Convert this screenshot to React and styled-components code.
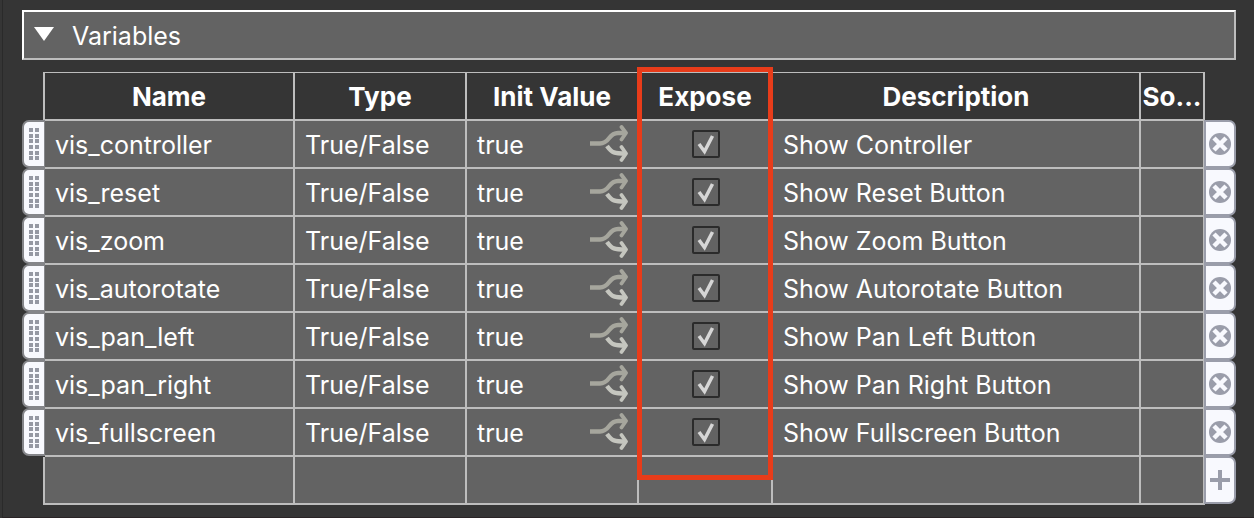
import React from "react";
import styled, { createGlobalStyle } from "styled-components";

const line = "#bdbdbd";
const fill = "#636363";
const dark = "#353535";

const GlobalStyle = createGlobalStyle`
  *, *::before, *::after { box-sizing: border-box; }
  body {
    margin: 0;
    background: ${dark};
    color: #fff;
    font-family: Inter, "Liberation Sans", sans-serif;
    font-size: 25px;
    line-height: 30px;
  }
`;

const Page = styled.main`
  margin-left: 2px;
  padding: 10px 18px 12px 19px;
  border-left: 1px solid #2a2a2a;
  border-bottom: 1px solid #2a2426;
`;

const PanelHeader = styled.button`
  display: flex;
  align-items: center;
  gap: 18px;
  width: 100%;
  height: 50px;
  padding: 2px 10px 0;
  border: 2px solid;
  border-color: #fff ${line} ${line} #fff;
  background: ${fill};
  color: inherit;
  font: inherit;
  text-align: left;
`;

const Disclosure = styled.svg`
  width: 20px;
  height: 16px;
  margin-bottom: 4px;
`;

const Table = styled.table`
  width: 100%;
  margin-top: 12px;
  border-collapse: separate;
  border-spacing: 0;
  table-layout: fixed;
`;

const Col = styled.col`
  width: ${(p) => (p.$width ? `${p.$width}px` : "auto")};
`;

const HeadCell = styled.th`
  height: 49px;
  padding: 2px 0 0;
  border: solid ${line};
  border-width: 1px 2px 2px 0;
  font-size: 26px;
  font-weight: 700;
  white-space: nowrap;
`;

const Cell = styled.td`
  height: 48px;
  padding: 2px 9px 0 10px;
  border: solid ${line};
  border-width: 0 2px 2px 0;
  background: ${fill};
  white-space: nowrap;
`;

const CheckCell = styled(Cell)`
  padding: 0 10px 0 12px;
`;

const EdgeCell = styled.td`
  height: 48px;
  padding: 0;
  border-right: ${(p) => (p.$ruled ? `2px solid ${line}` : "0")};
  vertical-align: top;
`;

const InitValue = styled.div`
  display: flex;
  align-items: center;
  justify-content: space-between;
  svg { margin-bottom: 2px; }
`;

const Check = styled.input`
  appearance: none;
  display: block;
  width: 28px;
  height: 28px;
  margin: 0;
  border: 2px solid #2b2b2b;
  border-radius: 2px;
`;

const CheckBox = styled.label`
  display: grid;
  justify-content: center;
  > * { grid-area: 1 / 1; }
  svg { width: 28px; height: 28px; pointer-events: none; }
  input:not(:checked) + svg { visibility: hidden; }
`;

const Handle = styled.button`
  display: grid;
  place-items: center;
  width: 100%;
  height: 48px;
  margin-top: -1px;
  padding: 0;
  border: 2px solid #85868a;
  border-right-width: 1px;
  border-radius: 7px 0 0 7px;
  background: #f8f9fe;
`;

const RowAction = styled.button`
  display: grid;
  place-items: center;
  width: 32px;
  height: 48px;
  margin: -1px 0 0 -1px;
  padding: 0;
  border: 2px solid #9a9daa;
  border-radius: 0 7px 7px 0;
  background: #f8f9fe;
`;

const Highlighted = styled.div`
  position: relative;
`;

const Highlight = styled.div`
  position: absolute;
  top: -5px;
  bottom: 25px;
  left: 615px;
  right: 463px;
  border: 5px solid #e83c1a;
  pointer-events: none;
`;

const Grip = () => (
  <svg width="10" height="32" fill="#9598a3" aria-hidden="true">
    {[0, 6, 11, 17, 23, 28].map((y) => (
      <path key={y} d={`M0 ${y}h4v4h-4zM6 ${y}h4v4h-4z`} />
    ))}
  </svg>
);

const Branch = () => (
  <svg width="38" height="38" viewBox="0 0 38 38" fill="none" strokeWidth="4.400" aria-hidden="true">
    <g stroke="#c5c6bf">
      <path d="M17 21C22 28 24 28.500 36 28.500" />
      <path d="M31.500 22L36 28.500L31.500 35" strokeWidth="3.800" strokeLinecap="round" strokeLinejoin="round" />
    </g>
    <g stroke="#a6a69d">
      <path d="M0 18.500H10C20 18.500 18 8 28 8H36" />
      <path d="M31.500 2L36 8L31.500 14.500" strokeWidth="3.800" strokeLinecap="round" strokeLinejoin="round" />
    </g>
  </svg>
);

const DeleteIcon = () => (
  <svg width="22" height="22" viewBox="0 0 22 22" aria-hidden="true">
    <circle cx="11" cy="11" r="11" fill="#9a9daa" />
    <path d="M5 5L17 17M17 5L5 17" stroke="#f8f9fe" strokeWidth="4.500" />
  </svg>
);

const AddIcon = () => (
  <svg width="20" height="20" aria-hidden="true">
    <path d="M10 0V20M0 10H20" stroke="#9a9daa" strokeWidth="4" />
  </svg>
);

const headings = ["Name", "Type", "Init Value", "Expose", "Description", "So..."];
const widths = [23, 250, 172, 172, 134, null, 64, 31];
const variables = [
  ["vis_controller", "Show Controller"],
  ["vis_reset", "Show Reset Button"],
  ["vis_zoom", "Show Zoom Button"],
  ["vis_autorotate", "Show Autorotate Button"],
  ["vis_pan_left", "Show Pan Left Button"],
  ["vis_pan_right", "Show Pan Right Button"],
  ["vis_fullscreen", "Show Fullscreen Button"],
];

function VariableRow({ name, description }) {
  return (
    <tr>
      <EdgeCell><Handle aria-label={`Move ${name}`}><Grip /></Handle></EdgeCell>
      <Cell>{name}</Cell>
      <Cell>True/False</Cell>
      <Cell><InitValue>true<Branch /></InitValue></Cell>
      <CheckCell>
        <CheckBox>
          <Check type="checkbox" defaultChecked aria-label={`Expose ${name}`} />
          <svg viewBox="0 0 28 28" fill="none" stroke="#d6d6d6" strokeWidth="3.500" aria-hidden="true">
            <path d="M7 14L12.500 21.500L20.500 6" />
          </svg>
        </CheckBox>
      </CheckCell>
      <Cell>{description}</Cell>
      <Cell />
      <EdgeCell><RowAction aria-label={`Delete ${name}`}><DeleteIcon /></RowAction></EdgeCell>
    </tr>
  );
}

export default function App() {
  return (
    <Page>
      <GlobalStyle />
      <PanelHeader aria-expanded="true">
        <Disclosure viewBox="0 0 20 16"><path d="M0 1H20L10 15Z" fill="#fff" /></Disclosure>
        Variables
      </PanelHeader>
      <Highlighted>
        <Table>
          <colgroup>{widths.map((w, i) => <Col key={i} $width={w} />)}</colgroup>
          <thead>
            <tr>
              <EdgeCell $ruled />
              {headings.map((h) => <HeadCell key={h} scope="col">{h}</HeadCell>)}
              <EdgeCell />
            </tr>
          </thead>
          <tbody>
            {variables.map(([name, description]) => (
              <VariableRow key={name} name={name} description={description} />
            ))}
            <tr>
              <EdgeCell $ruled />
              {headings.map((h) => <Cell key={h} />)}
              <EdgeCell><RowAction aria-label="Add variable"><AddIcon /></RowAction></EdgeCell>
            </tr>
          </tbody>
        </Table>
        <Highlight />
      </Highlighted>
    </Page>
  );
}
